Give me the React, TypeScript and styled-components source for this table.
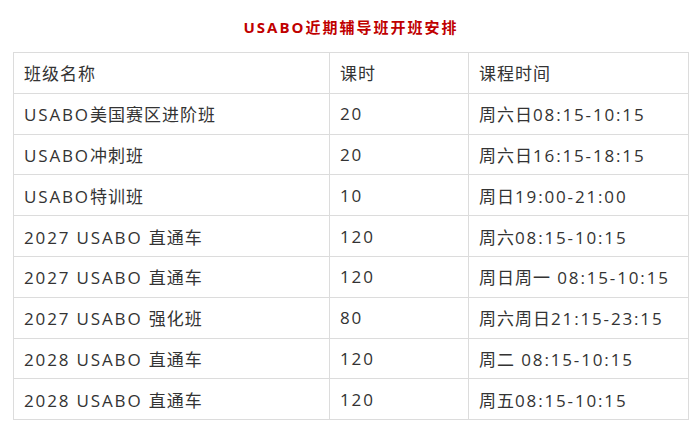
import * as React from "react";
import styled, { createGlobalStyle } from "styled-components";

const GlobalStyle = createGlobalStyle`
  html, body {
    margin: 0;
    padding: 0;
    background: #ffffff;
  }
  body {
    font-family: "Open Sans", "Noto Sans CJK SC", sans-serif;
    color: #333333;
  }
`;

const Page = styled.div`
  padding: 17px 10px 0 13px;
`;

const Title = styled.h2`
  margin: 0 0 15px;
  height: 20px;
  line-height: 20px;
  text-align: center;
  font-size: 15px;
  font-weight: 700;
  letter-spacing: 2px;
  color: #c00000;
`;

const Table = styled.table`
  width: 100%;
  border-collapse: collapse;
  table-layout: fixed;
`;

const Cell = styled.td<{ $width?: number }>`
  border: 1px solid #dcdcdc;
  height: 40.8px;
  padding: 0 10px;
  box-sizing: border-box;
  font-size: 17px;
  letter-spacing: 1px;
  color: #333333;
  white-space: nowrap;
  vertical-align: middle;
  ${(p) => (p.$width ? `width: ${p.$width}px;` : "")}
`;

// latin runs sit a little wider than the cjk ones in the original
const Latin = styled.span`
  letter-spacing: 1.85px;
`;

function Text({ value }: { value: string }) {
  const parts = value.split(/([\u4e00-\u9fff]+)/).filter(Boolean);
  return (
    <>
      {parts.map((p, i) =>
        /[\u4e00-\u9fff]/.test(p) ? (
          <React.Fragment key={i}>{p}</React.Fragment>
        ) : (
          <Latin key={i}>{p}</Latin>
        )
      )}
    </>
  );
}

const rows = [
  ["USABO美国赛区进阶班", "20", "周六日08:15-10:15"],
  ["USABO冲刺班", "20", "周六日16:15-18:15"],
  ["USABO特训班", "10", "周日19:00-21:00"],
  ["2027 USABO 直通车", "120", "周六08:15-10:15"],
  ["2027 USABO 直通车", "120", "周日周一 08:15-10:15"],
  ["2027 USABO 强化班", "80", "周六周日21:15-23:15"],
  ["2028 USABO 直通车", "120", "周二 08:15-10:15"],
  ["2028 USABO 直通车", "120", "周五08:15-10:15"],
];

export default function App() {
  return (
    <Page>
      <GlobalStyle />
      <Title>USABO近期辅导班开班安排</Title>
      <Table>
        <tbody>
          <tr>
            <Cell $width={316}>班级名称</Cell>
            <Cell $width={139}>课时</Cell>
            <Cell>课程时间</Cell>
          </tr>
          {rows.map((r, i) => (
            <tr key={i}>
              {r.map((c, j) => (
                <Cell key={j}>
                  <Text value={c} />
                </Cell>
              ))}
            </tr>
          ))}
        </tbody>
      </Table>
    </Page>
  );
}
